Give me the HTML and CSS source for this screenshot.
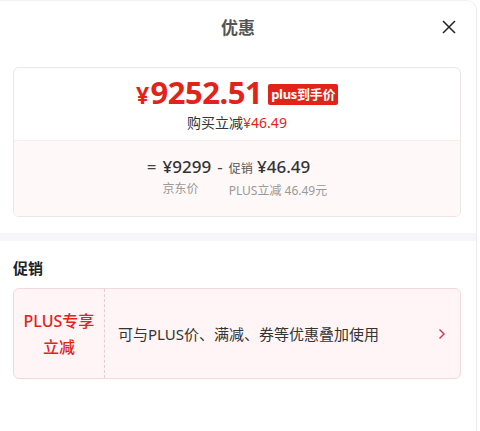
FILE: index.html
```html
<!DOCTYPE html>
<html lang="zh-CN">
<head>
  <meta charset="UTF-8">
  <title>优惠</title>
  <link rel="stylesheet" href="styles.css">
</head>
<body>

<div class="panel">
  <div class="head">
    <span class="title">优惠</span>
    <span class="close">
      <svg width="16" height="16" viewBox="0 0 16 16"><path d="M2 2L14 14M14 2L2 14" stroke="#222" stroke-width="1.5" fill="none"/></svg>
    </span>
  </div>

  <div class="price-card">
    <div class="price-top">
      <div class="final">
        <span class="num"><span class="yen">¥</span>9252.51</span>
        <span class="badge">plus到手价</span>
      </div>
      <div class="save">购买立减<span class="red">¥46.49</span></div>
    </div>
    <div class="price-calc">
      <div class="formula">
        <span class="op">=</span>
        <span class="item">
          <span class="val">¥9299</span>
          <span class="lbl">京东价</span>
        </span>
        <span class="op">-</span>
        <span class="item">
          <span class="val"><small>促销</small> ¥46.49</span>
          <span class="lbl">PLUS立减 46.49元</span>
        </span>
      </div>
    </div>
  </div>

  <div class="gap-band"></div>

  <div class="promo">
    <h4>促销</h4>
    <div class="promo-card">
      <div class="tag">PLUS专享<br>立减</div>
      <div class="desc">可与PLUS价、满减、券等优惠叠加使用</div>
      <span class="arrow">
        <svg width="8" height="12" viewBox="0 0 8 12"><path d="M1.5 1.5L6 6L1.5 10.5" stroke="#d0304a" stroke-width="1.4" fill="none"/></svg>
      </span>
    </div>
  </div>
</div>

</body>
</html>
```

FILE: styles.css
```css
body {
  margin: 0;
  background: #fff;
  font-family: "Noto Sans", "Noto Sans CJK SC", sans-serif;
  color: #222;
}
.panel {
  width: 477px;
  height: 431px;
  box-sizing: border-box;
  border-right: 1px solid #ececec;
  border-top: 1px solid #f2f2f2;
  border-top-right-radius: 10px;
  background: #fff;
}
.head {
  height: 50px;
  display: flex;
  align-items: center;
  justify-content: center;
  position: relative;
}
.title {
  font-size: 17px;
  font-weight: 700;
  color: #555;
}
.close {
  position: absolute;
  right: 19px;
  top: 17px;
  width: 16px;
  height: 16px;
}
.price-card {
  margin: 16px 15px 0 13px;
  border: 1px solid #f1e4e6;
  border-radius: 6px;
  overflow: hidden;
}
.price-top {
  height: 72px;
  display: flex;
  flex-direction: column;
  align-items: center;
  padding-top: 6px;
  box-sizing: border-box;
}
.final {
  display: flex;
  align-items: center;
  gap: 6px;
  height: 38px;
}
.num {
  font-size: 31px;
  font-weight: 700;
  color: #e2231a;
  letter-spacing: -0.5px;
  line-height: 38px;
}
.yen {
  font-size: 23px;
  margin-right: 2px;
}
.badge {
  background: #e2231a;
  color: #fff;
  font-size: 13px;
  font-weight: 700;
  padding: 0 3px;
  height: 21px;
  line-height: 21px;
  border-radius: 2px;
  margin-top: 3px;
  letter-spacing: -0.3px;
}
.save {
  font-size: 14px;
  color: #333;
  line-height: 18px;
  margin-top: 2px;
}
.red {
  color: #e2231a;
}
.price-calc {
  background: #fff8f8;
  border-top: 1px solid #f8eeee;
  height: 76px;
  display: flex;
  justify-content: center;
  padding-top: 14px;
  box-sizing: border-box;
}
.formula {
  display: flex;
  align-items: flex-start;
  gap: 6px;
}
.op {
  font-size: 17px;
  color: #444;
  line-height: 24px;
}
.item {
  display: flex;
  flex-direction: column;
  align-items: flex-start;
}
.val {
  font-size: 17px;
  font-weight: 500;
  color: #333;
  line-height: 24px;
}
.val small {
  font-size: 12px;
  font-weight: 400;
  color: #555;
}
.lbl {
  font-size: 12px;
  color: #999;
  line-height: 18px;
  margin-top: 1px;
}
.gap-band {
  height: 8px;
  margin-top: 16px;
  background: #f6f6fa;
}
.promo {
  padding: 0 15px 0 13px;
}
.promo h4 {
  margin: 0;
  padding-top: 16px;
  font-size: 15px;
  font-weight: 700;
  color: #222;
  line-height: 22px;
}
.promo-card {
  margin-top: 9px;
  height: 91px;
  display: flex;
  align-items: center;
  background: #fff5f6;
  border: 1px solid #f3d9dd;
  border-radius: 6px;
  box-sizing: border-box;
}
.tag {
  width: 90px;
  height: 100%;
  display: flex;
  align-items: center;
  justify-content: center;
  text-align: center;
  border-right: 1px dashed #e6cdd1;
  color: #e2231a;
  font-size: 16px;
  font-weight: 500;
  line-height: 26px;
}
.desc {
  flex: 1;
  padding-left: 13px;
  font-size: 15px;
  color: #333;
}
.arrow {
  width: 8px;
  height: 12px;
  margin-right: 14px;
  display: flex;
}
```
